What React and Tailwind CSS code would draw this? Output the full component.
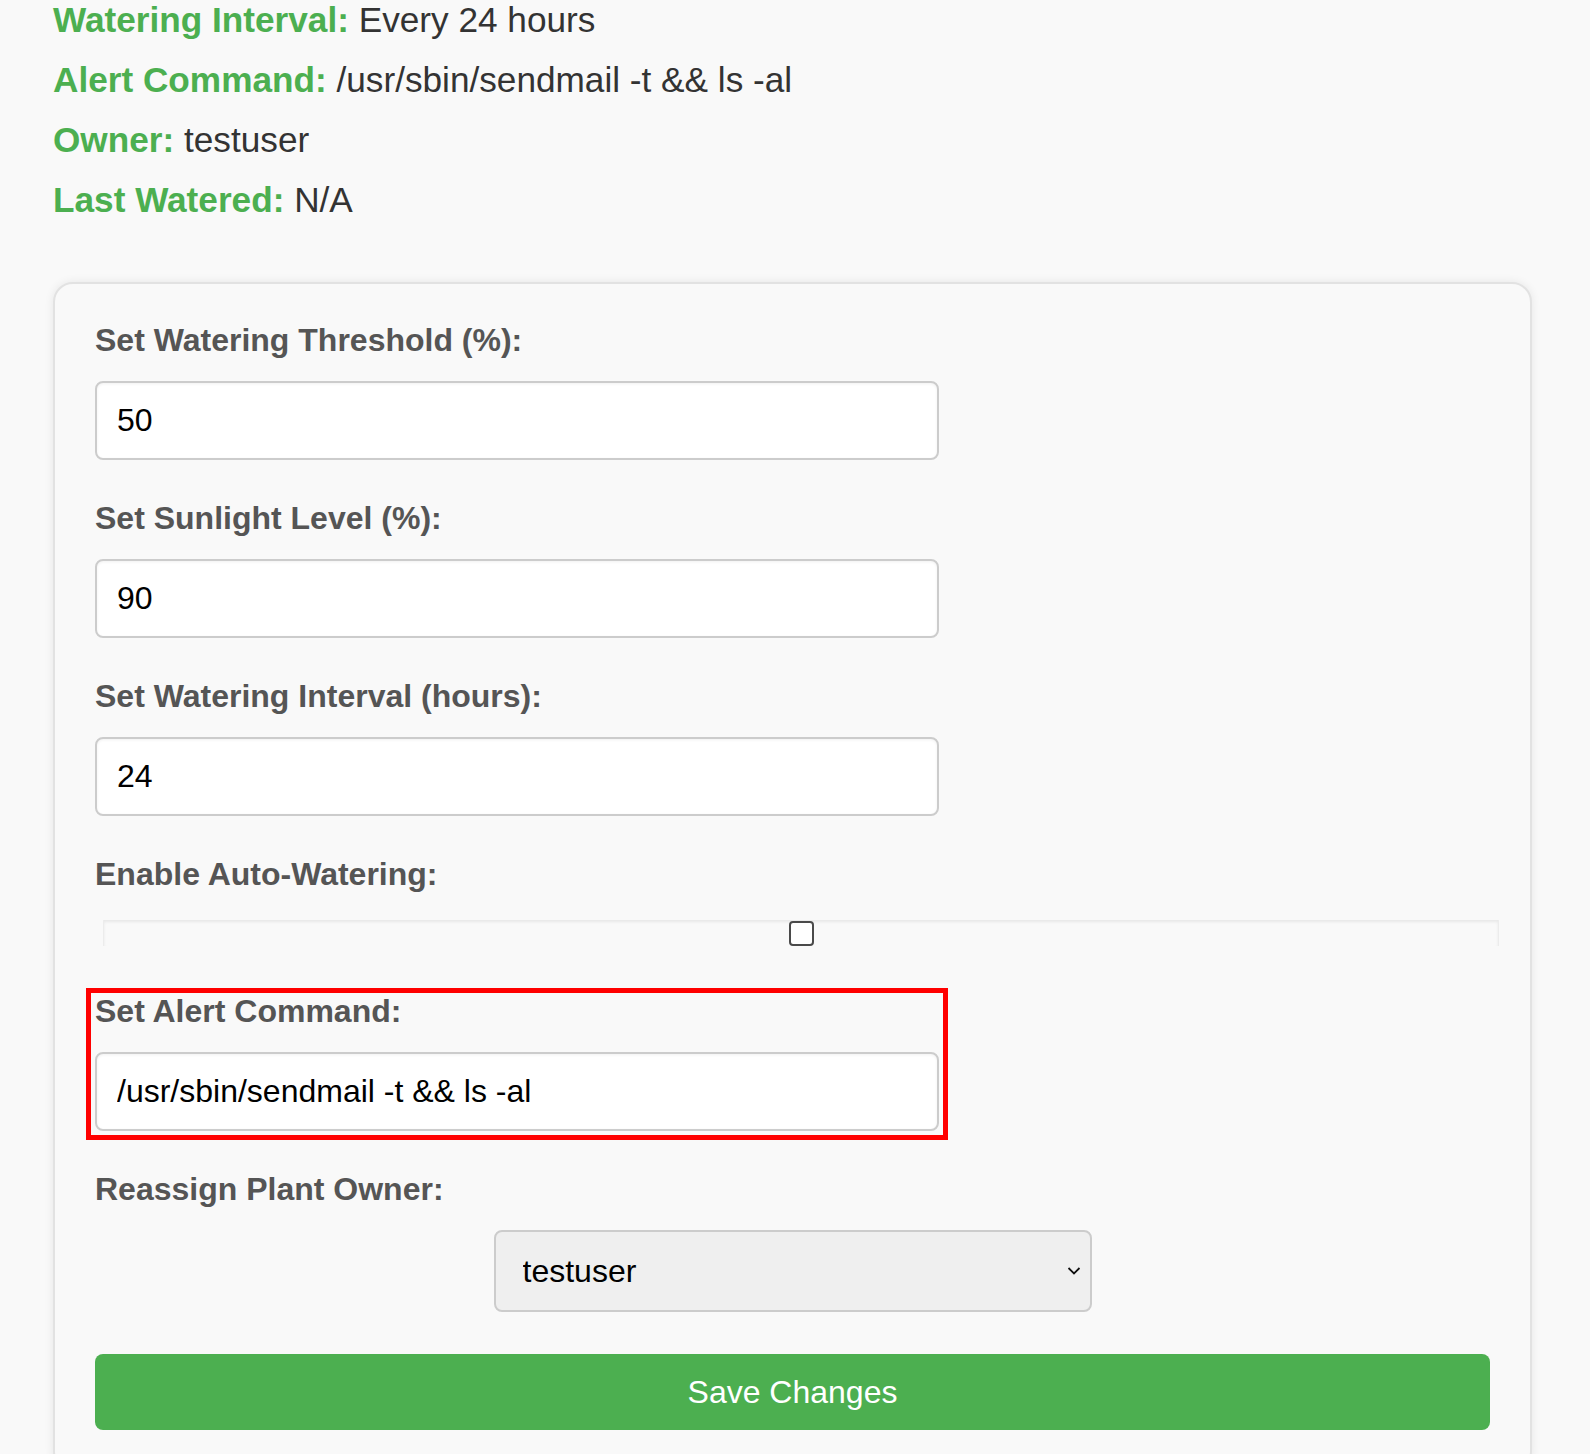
import { useState } from 'react'

const info = [
  { label: 'Watering Interval:', value: 'Every 24 hours' },
  { label: 'Alert Command:', value: '/usr/sbin/sendmail -t && ls -al' },
  { label: 'Owner:', value: 'testuser' },
  { label: 'Last Watered:', value: 'N/A' },
]

function Field({ label, value, onChange }) {
  return (
    <div>
      <div className="text-[32px] leading-[37px] font-bold text-[#555] mb-[22px]">{label}</div>
      <input
        type="text"
        value={value}
        onChange={e => onChange(e.target.value)}
        className="block w-[844px] h-[79px] bg-white border-2 border-[#ccc] rounded-lg px-[20px] text-[32px] text-black shadow-[inset_0_1px_3px_rgba(0,0,0,0.06)] focus:outline-none"
      />
    </div>
  )
}

export default function App() {
  const [threshold, setThreshold] = useState('50')
  const [sunlight, setSunlight] = useState('90')
  const [interval, setInterval] = useState('24')
  const [auto, setAuto] = useState(false)
  const [command, setCommand] = useState('/usr/sbin/sendmail -t && ls -al')
  const [owner, setOwner] = useState('testuser')

  return (
    <div className="min-h-screen bg-[#f9f9f9] pl-[53px] font-['Liberation_Sans',Arial,sans-serif] overflow-hidden">
      {/* Plant details */}
      <div className="flex flex-col gap-[20px]">
        {info.map(row => (
          <div key={row.label} className="text-[35.2px] leading-[40px] text-[#333]">
            <span className="font-bold text-[#4caf50]">{row.label}</span> {row.value}
          </div>
        ))}
      </div>

      {/* Settings card */}
      <div className="mt-[62px] w-[1479px] bg-[#f9f9f9] border-2 border-[#e2e2e2] rounded-[20px] shadow-[0_0_10px_rgba(0,0,0,0.08)] px-[40px] pt-[38px] pb-[40px]">
        <div className="flex flex-col gap-[40px]">
          <Field label="Set Watering Threshold (%):" value={threshold} onChange={setThreshold} />
          <Field label="Set Sunlight Level (%):" value={sunlight} onChange={setSunlight} />
          <Field label="Set Watering Interval (hours):" value={interval} onChange={setInterval} />
        </div>

        <div className="mt-[40px]">
          <div className="text-[32px] leading-[37px] font-bold text-[#555]">Enable Auto-Watering:</div>
          <div
            onClick={() => setAuto(!auto)}
            className="mt-[27px] ml-[8px] w-[1396px] h-[26px] flex items-center justify-center shadow-[inset_0_2px_3px_rgba(0,0,0,0.07)] border-x border-[#ececec] cursor-pointer"
          >
            <div className="w-[25px] h-[25px] bg-white border-2 border-[#4a4a4a] rounded-[4px] flex items-center justify-center">
              {auto && (
                <svg width="15" height="15" viewBox="0 0 16 16">
                  <path d="M3 8.5l3 3 7-7" fill="none" stroke="#333" strokeWidth="2" />
                </svg>
              )}
            </div>
          </div>
        </div>

        {/* Alert command, highlighted */}
        <div className="relative mt-[47px]">
          <div className="absolute left-[-9px] top-[-5px] w-[862px] h-[152px] border-[5px] border-[#ff0000] pointer-events-none" />
          <Field label="Set Alert Command:" value={command} onChange={setCommand} />
        </div>

        <div className="mt-[40px]">
          <div className="text-[32px] leading-[37px] font-bold text-[#555] mb-[22px]">Reassign Plant Owner:</div>
          <div className="flex justify-center">
            <div className="relative w-[598px]">
              <select
                value={owner}
                onChange={e => setOwner(e.target.value)}
                className="block w-full h-[82px] appearance-none bg-[#efefef] border-2 border-[#ccc] rounded-lg pl-[27px] text-[32px] text-black focus:outline-none"
              >
                <option value="testuser">testuser</option>
                <option value="admin">admin</option>
              </select>
              <svg
                className="absolute right-[11px] top-1/2 -translate-y-1/2 pointer-events-none"
                width="14"
                height="9"
                viewBox="0 0 14 9"
              >
                <path d="M1.5 1.5l5.5 5.5 5.5-5.5" fill="none" stroke="#111" strokeWidth="1.8" />
              </svg>
            </div>
          </div>
        </div>

        <button className="mt-[42px] w-full h-[76px] bg-[#4caf50] rounded-lg text-white text-[32px]">
          Save Changes
        </button>
      </div>
    </div>
  )
}
